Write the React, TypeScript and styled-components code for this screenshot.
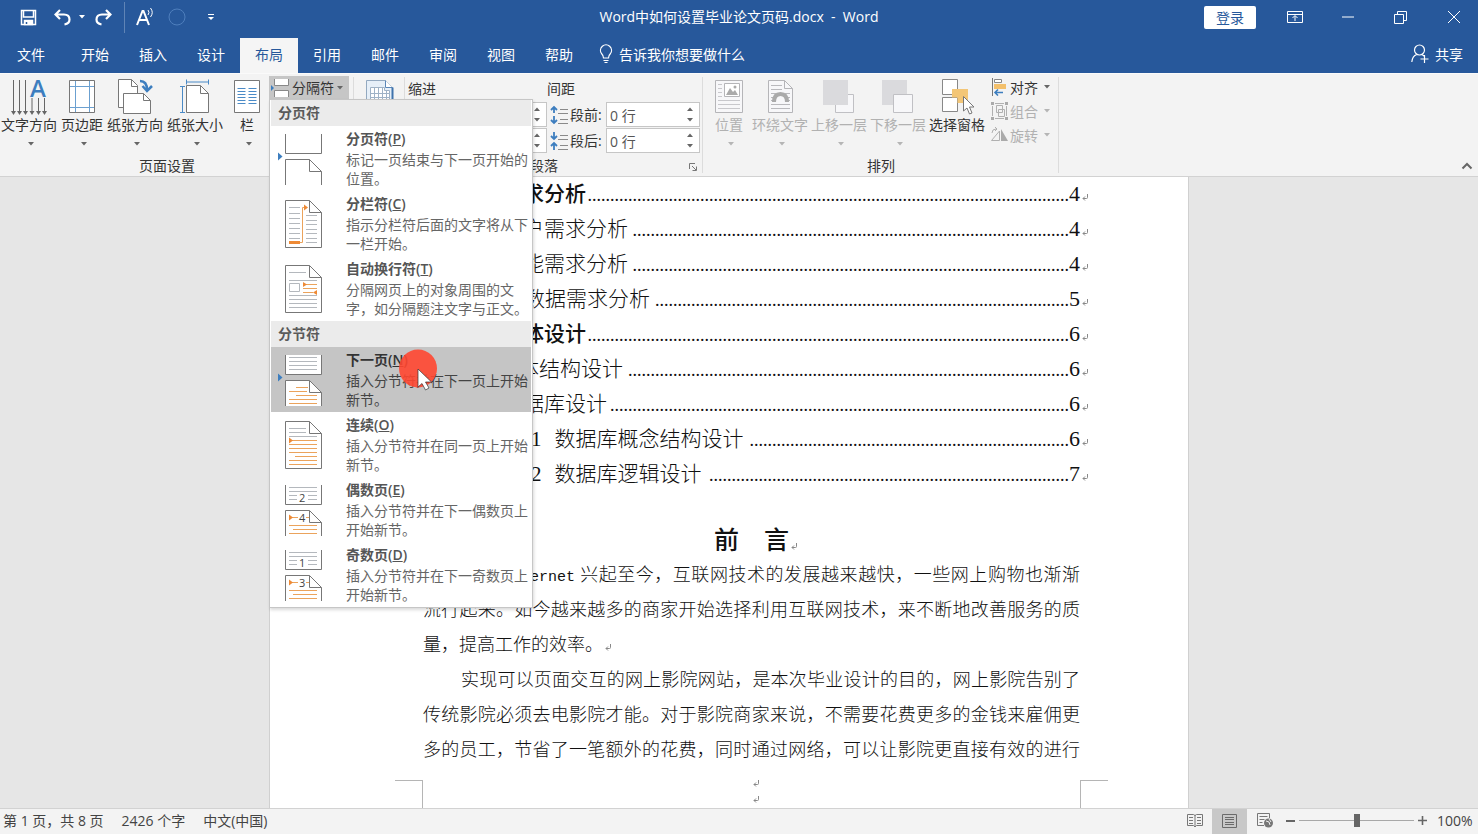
import React from 'react';
import styled, { createGlobalStyle, css } from 'styled-components';

const blue = '#27589b';
const uiFont = '"Open Sans", "Noto Sans CJK SC", sans-serif';
const docFont = '"Liberation Serif", "Noto Sans CJK SC", serif';

const GlobalStyle = createGlobalStyle`
  *, *::before, *::after { box-sizing: border-box; }
  body { margin: 0; font-family: ${uiFont}; font-size: 14px; color: #333; }
  button, input { font: inherit; color: inherit; }
  button { margin: 0; padding: 0; border: 0; background: none; }
  svg { display: block; flex: none; }
`;

const AppFrame = styled.div`
  display: flex;
  flex-direction: column;
  height: 100vh;
  overflow: hidden;
  background: #e6e6e6;
`;

/* ---------- title bar ---------- */

const TitleBar = styled.header`
  display: grid;
  grid-template-columns: 1fr auto 1fr;
  align-items: center;
  height: 36px;
  padding-bottom: 2px;
  flex: none;
  background: ${blue};
  color: #fff;
`;

const QuickAccess = styled.div`
  display: flex;
  align-items: center;
  height: 34px;
  padding-left: 20px;
`;

const QuickButton = styled.button<{ $gap?: number }>`
  display: grid;
  place-items: center;
  height: 32px;
  margin-right: ${(p) => p.$gap ?? 0}px;
`;

const QuickDivider = styled.span`
  width: 1px;
  height: 31px;
  margin: 0 11px 0 12px;
  background: #5f84b6;
`;

const DocTitle = styled.h1`
  margin: 0;
  font-size: 14px;
  font-weight: 400;
  line-height: 20px;
  white-space: pre;
`;

const WindowControls = styled.div`
  display: flex;
  align-items: center;
  justify-content: flex-end;
`;

const SignIn = styled.button`
  width: 52px;
  height: 23px;
  margin-right: 12px;
  border-radius: 2px;
  background: #fff;
  color: ${blue};
  line-height: 23px;
`;

const WindowButton = styled.button`
  display: grid;
  place-items: center;
  width: 53px;
  height: 34px;
  &:last-child { margin-right: -2px; }
`;

/* ---------- tabs ---------- */

const TabBar = styled.nav`
  display: flex;
  height: 37px;
  flex: none;
  background: ${blue};
  color: #fff;
`;

const Tab = styled.button<{ $active?: boolean; $file?: boolean }>`
  width: ${(p) => (p.$file ? 62 : 58)}px;
  height: 35px;
  margin: 2px ${(p) => (p.$file ? 4 : 0)}px 0 0;
  padding-bottom: 2px;
  line-height: 33px;
  ${(p) => p.$active && css`background: #f5f5f5; color: ${blue};`}
`;

const TellMe = styled.button`
  display: flex;
  align-items: center;
  gap: 6px;
  margin-left: 11px;
  padding-bottom: 2px;
`;

const Share = styled.button`
  display: flex;
  align-items: center;
  gap: 6px;
  margin: 0 15px 0 auto;
  padding-bottom: 2px;
`;

/* ---------- ribbon ---------- */

const Ribbon = styled.section`
  position: relative;
  z-index: 2;
  display: flex;
  height: 104px;
  flex: none;
  border-top: 1px solid #fafafa;
  border-bottom: 1px solid #d2d2d2;
  background: #f3f3f3;
`;

const Group = styled.div<{ $width: number }>`
  position: relative;
  display: flex;
  flex-direction: column;
  width: ${(p) => p.$width}px;
  flex: none;
  &::after {
    content: '';
    position: absolute;
    top: 3px;
    right: 0;
    bottom: 3px;
    width: 1px;
    background: #dcdcdc;
  }
`;

const GroupBody = styled.div<{ $inset: number; $gap?: number }>`
  display: flex;
  gap: ${(p) => p.$gap ?? 4}px;
  height: 82px;
  padding-left: ${(p) => p.$inset}px;
`;

const GroupLabel = styled.div<{ $launcher?: boolean }>`
  display: flex;
  align-items: center;
  justify-content: center;
  height: 19px;
  padding-right: ${(p) => (p.$launcher ? 20 : 0)}px;
  line-height: 19px;
`;

const Launcher = styled.button`
  position: absolute;
  right: 6px;
  bottom: 5px;
`;

const BigButton = styled.button<{ $width?: number }>`
  display: flex;
  flex-direction: column;
  align-items: center;
  width: ${(p) => p.$width ?? 56}px;
  padding-top: 4px;
  white-space: nowrap;
  &:disabled { color: #b1b1b1; }
  > svg:last-child:not(:first-child) { margin-left: 4px; }
`;

const BigLabel = styled.span`
  height: 20px;
  margin-bottom: 6px;
  line-height: 18px;
`;

const SmallColumn = styled.div`
  display: flex;
  flex-direction: column;
  padding: 1px 0 0 3px;
`;

const SmallButton = styled.button`
  display: flex;
  align-items: center;
  gap: 2px;
  height: 24px;
  &:disabled { color: #b1b1b1; }
  svg:last-child { margin-left: 4px; }
`;

const BreaksAnchor = styled.div`
  position: relative;
  z-index: 5;
  margin: 2px 0 0 -2px;
`;

const BreaksButton = styled.button`
  display: flex;
  align-items: center;
  gap: 3px;
  width: 80px;
  height: 23px;
  padding-left: 2px;
  background: #c6c6c6;
  line-height: 22px;
`;

const Fields = styled.div`
  display: grid;
  grid-template-columns: 139px 1fr;
  row-gap: 1px;
  align-content: start;
  padding-top: 3px;
`;

const FieldHeading = styled.div`
  height: 24px;
  line-height: 24px;
`;

const FieldRow = styled.div<{ $end?: boolean }>`
  display: flex;
  align-items: center;
  justify-content: ${(p) => (p.$end ? 'flex-end' : 'flex-start')};
  height: 25px;
  padding-left: 3px;
`;

const FieldLabel = styled.label`
  width: 36px;
  margin-left: 1px;
  line-height: 24px;
  white-space: nowrap;
`;

const SpinBox = styled.span`
  display: flex;
  align-items: center;
  width: 94px;
  height: 25px;
  border: 1px solid #c6c6c6;
  background: #fff;
`;

const SpinInput = styled.input`
  flex: 1;
  min-width: 0;
  height: 21px;
  padding: 0 3px;
  border: 0;
  outline: 0;
  background: transparent;
  color: #555;
`;

const SpinArrows = styled.span`
  display: flex;
  flex-direction: column;
  gap: 5px;
  padding-right: 5px;
`;

const SpinArrow = styled.button`
  display: grid;
  place-items: center;
  width: 8px;
  height: 6px;
`;

const Collapse = styled.button`
  margin: auto 5px 6px auto;
`;

/* ---------- breaks menu ---------- */

const Menu = styled.div`
  position: absolute;
  top: 23px;
  left: 0;
  width: 264px;
  padding: 0 1px;
  border: 1px solid #c6c6c6;
  background: #fff;
  box-shadow: 1px 2px 3px rgba(0, 0, 0, 0.15);
`;

const MenuHeading = styled.div`
  height: 26px;
  padding-left: 7px;
  background: #ebebeb;
  color: #5a5a5a;
  font-weight: 600;
  line-height: 26px;
`;

const MenuItem = styled.button<{ $hot?: boolean }>`
  position: relative;
  display: flex;
  gap: 22px;
  width: 100%;
  height: 65px;
  padding: 2px 0 0 7px;
  text-align: left;
  color: #666;
  ${(p) => p.$hot && css`background: #c5c5c5; color: #444;`}
  > svg { margin-top: 6px; }
`;

const ItemTitle = styled.strong<{ $hot?: boolean }>`
  display: block;
  color: ${(p) => (p.$hot ? '#333' : '#555')};
  font-weight: 600;
  line-height: 22px;
`;

const ItemText = styled.span`
  display: block;
  line-height: 19px;
  white-space: pre;
`;

const Pointer = styled.span`
  position: absolute;
  z-index: 1;
  top: 2px;
  left: 128px;
`;

/* ---------- document ---------- */

const Workspace = styled.main`
  display: flex;
  justify-content: center;
  flex: 1;
  min-height: 0;
  padding-right: 20px;
  overflow: hidden;
`;

const Sheet = styled.article`
  width: 920px;
  padding: 0 80px 0 125px;
  border: solid #d0d0d0;
  border-width: 0 1px;
  overflow: hidden;
  background: #fff;
  color: #111;
  font-family: ${docFont};
`;

const Toc = styled.ol`
  margin: -1px 0 0;
  padding: 0 20px 0 28px;
  list-style: none;
`;

const TocRow = styled.li<{ $strong?: boolean; $indent: number }>`
  display: flex;
  align-items: baseline;
  height: 35px;
  padding-left: ${(p) => p.$indent}px;
  font-size: 21px;
  font-weight: ${(p) => (p.$strong ? 500 : 300)};
  line-height: 35px;
  white-space: nowrap;
`;

const TocNumber = styled.span`
  padding-right: 13px;
`;

const Leader = styled.span`
  margin-left: auto;
  font-size: 18px;
  font-weight: 400;
`;

const TocPage = styled.span`
  font-size: 22px;
  font-weight: 400;
`;

const ReturnMark = styled.span`
  display: inline-flex;
  width: 8px;
  padding: 0 0 0 2px;
`;

const TocMark = styled.span`
  display: flex;
  align-self: flex-start;
  width: 8px;
  padding: 18px 0 0 2px;
`;

const Chapter = styled.h2`
  display: flex;
  align-items: center;
  justify-content: center;
  height: 35px;
  margin: 32px 20px 0 28px;
  font-size: 25px;
  font-weight: 500;
  line-height: 35px;
  white-space: pre;
  span { margin-top: 12px; }
`;

const Paragraph = styled.p<{ $fill?: boolean }>`
  margin: 0 28px;
  font-size: 18px;
  font-weight: 300;
  line-height: 35px;
  text-align: justify;
  text-align-last: ${(p) => (p.$fill ? 'justify' : 'left')};
  text-indent: 38px;
`;

const Latin = styled.span`
  font-family: "Liberation Mono", monospace;
  font-size: 15px;
  font-weight: 400;
  line-height: 20px;
`;

const PageFoot = styled.footer`
  display: flex;
  justify-content: space-between;
  margin-top: 12px;
`;

const Corner = styled.span<{ $side: 'left' | 'right' }>`
  width: 28px;
  height: 40px;
  border-top: 1px solid #b5b5b5;
  border-${(p) => (p.$side === 'left' ? 'right' : 'left')}: 1px solid #b5b5b5;
`;

const FootMarks = styled.span`
  display: flex;
  flex-direction: column;
  gap: 9px;
  padding-left: 8px;
`;

/* ---------- status bar ---------- */

const StatusBar = styled.footer`
  display: flex;
  align-items: center;
  height: 26px;
  flex: none;
  padding: 0 2px 0 3px;
  border-top: 1px solid #d2d2d2;
  background: #f3f3f3;
  color: #444;
  line-height: 22px;
`;

const StatusItem = styled.span`
  margin-right: 18px;
  padding-bottom: 2px;
  white-space: nowrap;
`;

const ViewButton = styled.button<{ $active?: boolean }>`
  display: grid;
  place-items: center;
  width: 35px;
  height: 25px;
  padding-bottom: 2px;
  background: ${(p) => (p.$active ? '#c8c8c8' : 'transparent')};
`;

const Views = styled.div`
  display: flex;
  margin-left: auto;
`;

const ZoomControls = styled.div`
  display: flex;
  align-items: center;
  height: 25px;
  padding-bottom: 2px;
`;

const ZoomButton = styled.button`
  display: grid;
  place-items: center;
  width: 17px;
  height: 23px;
`;

const ZoomSlider = styled.input`
  appearance: none;
  width: 115px;
  height: 14px;
  margin: 0;
  background: linear-gradient(#a8a8a8, #a8a8a8) center / 100% 1px no-repeat;
  &::-webkit-slider-thumb {
    appearance: none;
    width: 6px;
    height: 13px;
    background: #666;
  }
`;

const ZoomValue = styled.span`
  width: 39px;
  margin-left: 6px;
`;

/* ---------- drawings ---------- */

const Caret = ({ color = '#666' }: { color?: string }) => (
  <svg width="6" height="4" viewBox="0 0 6 4"><path d="M0 0h6L3 3.5z" fill={color} /></svg>
);

const Enter = () => (
  <svg width="6" height="7" viewBox="0 0 6 7" fill="none" stroke="#888">
    <path d="M5.5 0v3.5q0 1-1 1H1M3 2.5L1 4.5l2 2" />
  </svg>
);

const bigIcons: Record<string, React.ReactNode> = {
  direction: (
    <>
      <path d="M3.5 2v31M9.5 2v31M15.5 2v31M22 20v13M28.5 20v13M34.5 20v13" stroke="#666" />
      <path d="M1 33h5l-2.500 4zM7 33h5l-2.500 4zM13 33h5l-2.500 4zM19.500 33h5L22 37zM26 33h5l-2.500 4zM32 33h5l-2.500 4z" fill="#666" />
      <text x="20" y="19" fontSize="24" fontWeight="600" fill="#3d7ebf" fontFamily="Open Sans">A</text>
    </>
  ),
  margins: (
    <>
      <path d="M6.500 2.500h25v32h-25z" fill="#fff" stroke="#777" />
      <path d="M12.500 3v31M26.500 3v31M7 8.500h24M7 29.500h24" stroke="#6ba0d0" />
    </>
  ),
  orientation: (
    <>
      <path d="M2.500 1.500h13l6 6v22h-19z" fill="#fff" stroke="#777" />
      <path d="M15.500 1.500v7h6" fill="none" stroke="#777" />
      <path d="M7.500 15.500h20l7 7v13h-27z" fill="#fff" stroke="#777" />
      <path d="M27.500 15.500v7h7" fill="none" stroke="#777" />
      <path d="M24 3q7 0 7 9M26.500 8l4.500 5 5-5" fill="none" stroke="#3d7ebf" strokeWidth="2.500" />
    </>
  ),
  size: (
    <>
      <path d="M10.500 7.500h14l8 8v19h-22z" fill="#fff" stroke="#777" />
      <path d="M24.500 7.500v8h8" fill="none" stroke="#777" />
      <path d="M10.500 1.500v5M32.500 1.500v5M10 4h22M4 8.500h5M4 34.500h5M6.500 9v25" stroke="#4a8ac6" />
    </>
  ),
  columns: (
    <>
      <path d="M6.500 2.500h25v32h-25z" fill="#fff" stroke="#777" />
      <path d="M9.500 10.500h8M9.500 13.500h8M9.500 16.500h8M9.500 19.500h8M9.500 22.500h8M9.500 25.500h8M20.500 10.500h8M20.500 13.500h8M20.500 16.500h8M20.500 19.500h8M20.500 22.500h8M20.500 25.500h8" stroke="#4a8ac6" />
    </>
  ),
  position: (
    <>
      <path d="M5.500 2.500h27v32h-27z" fill="#f7f7f9" stroke="#b5b5b8" />
      <path d="M14.500 5.500h15v13h-15z" fill="#fff" stroke="#b5b5b8" />
      <path d="M16 17l4-7 3 4 2-2 3 5z" fill="#aaa" />
      <circle cx="25" cy="9" r="1.500" fill="#aaa" />
      <path d="M8 6.500h4M8 10.500h4M8 14.500h4M8 18.500h4M8 22.500h22M8 26.500h22M8 30.500h22" stroke="#c8c8cc" />
    </>
  ),
  wrap: (
    <>
      <path d="M7.500 2.500h16l8 8v24h-24z" fill="#f7f7f9" stroke="#b5b5b8" />
      <path d="M23.500 2.500v8h8" fill="none" stroke="#b5b5b8" />
      <path d="M10 7.500h11M10 11.500h11M10 26.500h19M10 30.500h19M10 15.500h5M24 15.500h5M10 19.500h2M27 19.500h2M10 22.500h2M27 22.500h2" stroke="#b9b9bd" />
      <path d="M13 24q0-8 6.500-8t6.500 8" fill="none" stroke="#aaa" strokeWidth="4" />
    </>
  ),
  forward: (
    <>
      <path d="M22.500 16.500h11v18h-18v-9" fill="#f7f7f9" stroke="#c0c0c4" />
      <path d="M3 2h25v25H3z" fill="#dadadd" />
    </>
  ),
  backward: (
    <>
      <path d="M3 2h25v25H3z" fill="#dadadd" />
      <path d="M14.500 16.500h19v18h-19z" fill="#f7f7f9" stroke="#c0c0c4" />
    </>
  ),
  selection: (
    <>
      <path d="M4.500 1.500h15v15h-15zM4.500 19.500h15v14h-15z" fill="#fff" stroke="#888" />
      <path d="M14 11h16v14H19.500v-5.500H14z" fill="#f3c677" />
      <path d="M25.500 18.500v14.500l3.500-3 2.500 6 2.500-1-2.500-6h4.500z" fill="#fff" stroke="#777" />
    </>
  ),
};

const BigIcon = ({ name }: { name: string }) => (
  <svg width="38" height="38" viewBox="0 0 38 38">{bigIcons[name]}</svg>
);

const Fold = ({ y }: { y: number }) => (
  <path d={`M31.500 ${y}v12h12`} fill="none" stroke="#777" />
);

const TopPart = () => <path d="M7.500 0v19.500h36V0" fill="#fff" stroke="#777" />;
const BottomPart = () => (
  <>
    <path d="M7.500 51V25.500h24l12 12V51" fill="#fff" stroke="#777" />
    <Fold y={25.5} />
  </>
);
const WholePage = () => (
  <>
    <path d="M7.500 1.500h24l12 12v35h-36z" fill="#fff" stroke="#777" />
    <Fold y={1.5} />
  </>
);
const Marker = () => <path d="M0 18.500v8l4.500-4z" fill="#3d7ebf" />;
const grey = '#b4b8bd';
const orange = '#eba35c';

const NumberedPages = ({ first, second }: { first: string; second: string }) => (
  <>
    <TopPart />
    <BottomPart />
    <path d="M11 2.500h28M11 6.500h28M11 10.500h8M30 10.500h9M11 14.500h8M30 14.500h9" stroke={grey} />
    <path d="M13 32.500h7M28 32.500h3M11 40.500h28M15 44.500h24M11 48.500h28" stroke={orange} />
    <path d="M11 29.500v6l4-3z" fill="#ee8a35" />
    <text x="21" y="17" fontSize="11" fill="#444" fontFamily="Open Sans">{first}</text>
    <text x="21" y="37" fontSize="11" fill="#444" fontFamily="Open Sans">{second}</text>
  </>
);

const breakIcons: Record<string, React.ReactNode> = {
  page: <><Marker /><TopPart /><BottomPart /></>,
  column: (
    <>
      <WholePage />
      <path d="M11 8.500h11M11 14.500h11M11 19.500h11M11 24.500h11M11 29.500h11M11 34.500h11M11 39.500h11M28 16.500h11M28 21.500h11M28 25.500h11M28 30.500h11M28 34.500h11M28 39.500h11M28 43.500h11" stroke={grey} />
      <path d="M22 43.500h2.500v-35H27" fill="none" stroke={orange} />
      <path d="M26 5.500v6l4-3zM11 42h11v3H11z" fill="#ee8a35" />
    </>
  ),
  wrap: (
    <>
      <WholePage />
      <path d="M11 8.500h17M11 16.500h28M11 31.500h28M11 35.500h28M11 39.500h28M11 43.500h28" stroke={grey} />
      <path d="M11.500 19.500h10v8h-10z" fill="#fff" stroke={grey} />
      <path d="M26 20.500h13M25 24.500h14M25 28.500h10" stroke={orange} />
      <path d="M25 18v5l4-2.500zM39 26v5l-4-2.500z" fill="#ee8a35" />
    </>
  ),
  next: (
    <>
      <Marker /><TopPart /><BottomPart />
      <path d="M11 2.500h28M11 6.500h28M11 10.500h28M11 14.500h28" stroke={grey} />
      <path d="M18 32.500h12M11 36.500h18M18 40.500h21M11 44.500h28M11 48.500h28" stroke={orange} />
    </>
  ),
  continuous: (
    <>
      <WholePage />
      <path d="M11 8.500h17M11 12.500h17M11 16.500h28" stroke={grey} />
      <path d="M14 20.500h25M11 24.500h28M11 28.500h28M11 32.500h28M17 36.500h22M11 40.500h28M11 44.500h28" stroke={orange} />
      <path d="M11 17.500v6l4-3z" fill="#ee8a35" />
    </>
  ),
  even: <NumberedPages first="2" second="4" />,
  odd: <NumberedPages first="1" second="3" />,
};

/* ---------- data ---------- */

const tabs = ['开始', '插入', '设计', '布局', '引用', '邮件', '审阅', '视图', '帮助'];

const pageSetup = [
  { icon: 'direction', label: '文字方向' },
  { icon: 'margins', label: '页边距', width: 42 },
  { icon: 'orientation', label: '纸张方向' },
  { icon: 'size', label: '纸张大小' },
  { icon: 'columns', label: '栏', width: 40 },
];

const arrange = [
  { icon: 'position', label: '位置', width: 40 },
  { icon: 'wrap', label: '环绕文字' },
  { icon: 'forward', label: '上移一层' },
  { icon: 'backward', label: '下移一层' },
];

const pageBreaks = [
  { icon: 'page', title: '分页符', key: 'P', text: '标记一页结束与下一页开始的\n位置。' },
  { icon: 'column', title: '分栏符', key: 'C', text: '指示分栏符后面的文字将从下\n一栏开始。' },
  { icon: 'wrap', title: '自动换行符', key: 'T', text: '分隔网页上的对象周围的文\n字，如分隔题注文字与正文。' },
];

const sectionBreaks = [
  { icon: 'next', title: '下一页', key: 'N', text: '插入分节符并在下一页上开始\n新节。', hot: true },
  { icon: 'continuous', title: '连续', key: 'O', text: '插入分节符并在同一页上开始\n新节。' },
  { icon: 'even', title: '偶数页', key: 'E', text: '插入分节符并在下一偶数页上\n开始新节。' },
  { icon: 'odd', title: '奇数页', key: 'D', text: '插入分节符并在下一奇数页上\n开始新节。' },
];

const toc = [
  { title: '求分析', page: 4, indent: 100, dots: 107, strong: true },
  { title: '户需求分析', page: 4, indent: 100, dots: 97 },
  { title: '能需求分析', page: 4, indent: 100, dots: 97 },
  { title: '数据需求分析', page: 5, indent: 101, dots: 92 },
  { title: '体设计', page: 6, indent: 100, dots: 107, strong: true },
  { title: '体结构设计', page: 6, indent: 95, dots: 98 },
  { title: '据库设计', page: 6, indent: 100, dots: 102 },
  { no: '1', title: '数据库概念结构设计', page: 6, indent: 108, dots: 71 },
  { no: '2', title: '数据库逻辑设计', page: 7, indent: 108, dots: 80 },
];

/* ---------- parts ---------- */

type BreakEntry = { icon: string; title: string; key: string; text: string; hot?: boolean };

const BreakItem = ({ item }: { item: BreakEntry }) => (
  <MenuItem role="menuitem" $hot={item.hot}>
    <svg width="46" height="51" viewBox="0 0 46 51">{breakIcons[item.icon]}</svg>
    <span>
      <ItemTitle $hot={item.hot}>{item.title}(<u>{item.key}</u>)</ItemTitle>
      <ItemText>{item.text}</ItemText>
    </span>
    {item.hot && (
      <Pointer>
        <svg width="40" height="42" viewBox="0 0 40 42">
          <circle cx="19" cy="19.500" r="19" fill="#ff4630" fillOpacity=".9" />
          <path d="M19 20v18l4-3.500 3.500 6.500 3.500-2-3.500-6h6z" fill="#fff" stroke="#333" strokeWidth=".7" />
        </svg>
      </Pointer>
    )}
  </MenuItem>
);

const Spin = ({ id, value, label }: { id: string; value: string; label?: string }) => (
  <SpinBox>
    <SpinInput id={id} defaultValue={value} aria-label={label} />
    <SpinArrows>
      <SpinArrow aria-label="增加"><svg width="6" height="4"><path d="M0 4h6L3 .5z" fill="#666" /></svg></SpinArrow>
      <SpinArrow aria-label="减少"><Caret /></SpinArrow>
    </SpinArrows>
  </SpinBox>
);

const SpacingIcon = ({ before }: { before?: boolean }) => (
  <svg width="19" height="20" viewBox="0 0 19 20" fill="none">
    <path d="M10 4.500h8M8 8.500h10M10 14.500h8M8 18.500h10" stroke="#8a8a8a" />
    {before ? (
      <path d="M4 2v6M1 5l3-3 3 3M4 11v7M1 15l3 3 3-3" stroke="#3d7ebf" strokeWidth="1.800" />
    ) : (
      <path d="M4 1v7M1 5l3 3 3-3M4 12v7M1 15l3-3 3 3" stroke="#3d7ebf" strokeWidth="1.800" />
    )}
  </svg>
);

export default function App() {
  return (
    <AppFrame>
      <GlobalStyle />
      <TitleBar>
        <QuickAccess>
          <QuickButton aria-label="保存" $gap={17}>
            <svg width="17" height="17" viewBox="0 0 17 17" fill="none" stroke="#fff" strokeWidth="1.500">
              <path d="M1.500 1.500h14v14h-14zM3.500 2v6h10V2" /><path d="M4.500 11.500h8v4h-8z" fill="#fff" /><path d="M6.500 13v2" stroke={blue} />
            </svg>
          </QuickButton>
          <QuickButton aria-label="撤消" $gap={8}>
            <svg width="17" height="17" viewBox="0 0 17 17" fill="none" stroke="#fff" strokeWidth="2.200">
              <path d="M6 1L1.500 5.500 6 10M2 5.500h8q5.500 0 5.500 5 0 4-5 5" />
            </svg>
          </QuickButton>
          <QuickButton aria-label="撤消选项" $gap={10}><Caret color="#fff" /></QuickButton>
          <QuickButton aria-label="恢复">
            <svg width="17" height="17" viewBox="0 0 17 17" fill="none" stroke="#fff" strokeWidth="2.200">
              <path d="M11 1l4.500 4.500L11 10M15 5.500H7q-5.500 0-5.500 5 0 4 5 5" />
            </svg>
          </QuickButton>
          <QuickDivider />
          <QuickButton aria-label="朗读" $gap={14}>
            <svg width="18" height="20" viewBox="0 0 18 20" fill="none" stroke="#fff">
              <path d="M1 18L6.500 4h1L13 18M3 13h8" strokeWidth="2" /><path d="M12 3q2 2.500 0 5M14.500 1q3.500 4.500 0 9" />
            </svg>
          </QuickButton>
          <QuickButton aria-label="录制" $gap={21}>
            <svg width="18" height="18" viewBox="0 0 18 18"><circle cx="9" cy="9" r="8" fill="none" stroke="#4f7fbd" /></svg>
          </QuickButton>
          <QuickButton aria-label="自定义快速访问工具栏">
            <svg width="8" height="8" viewBox="0 0 8 8"><path d="M1 1.500h6" stroke="#fff" /><path d="M1 4h6L4 7z" fill="#fff" /></svg>
          </QuickButton>
        </QuickAccess>
        <DocTitle>Word中如何设置毕业论文页码.docx  -  Word</DocTitle>
        <WindowControls>
          <SignIn>登录</SignIn>
          <WindowButton aria-label="功能区显示选项">
            <svg width="16" height="14" viewBox="0 0 16 14" fill="none" stroke="#fff"><path d="M.5 1.500h15v11H.5zM.5 4.500h15M8 11V6M5.500 8L8 5.500 10.500 8" /></svg>
          </WindowButton>
          <WindowButton aria-label="最小化">
            <svg width="12" height="2"><path d="M0 1h12" stroke="#fff" /></svg>
          </WindowButton>
          <WindowButton aria-label="向下还原">
            <svg width="13" height="13" viewBox="0 0 13 13" fill="none" stroke="#fff"><path d="M.5 3.500h9v9h-9zM3.500 3V.5h9v9H10" /></svg>
          </WindowButton>
          <WindowButton aria-label="关闭">
            <svg width="12" height="12" viewBox="0 0 12 12" stroke="#fff"><path d="M0 0l12 12M12 0L0 12" /></svg>
          </WindowButton>
        </WindowControls>
      </TitleBar>

      <TabBar>
        <Tab $file>文件</Tab>
        {tabs.map((t) => <Tab key={t} $active={t === '布局'}>{t}</Tab>)}
        <TellMe>
          <svg width="14" height="20" viewBox="0 0 14 20" fill="none" stroke="#fff" strokeWidth="1.200">
            <path d="M4.500 14q0-2.500-2-4.500a5.500 5.500 0 1 1 9 0q-2 2-2 4.500zM4.500 16.500h5M5.500 18.500h3" />
          </svg>
          告诉我你想要做什么
        </TellMe>
        <Share>
          <svg width="18" height="19" viewBox="0 0 18 19" fill="none" stroke="#fff" strokeWidth="1.200">
            <circle cx="8.500" cy="6" r="5" /><path d="M.8 18q.5-6 5-7.500M11 10.500l2 1.500M13.500 11v8M9.500 15h8" />
          </svg>
          共享
        </Share>
      </TabBar>

      <Ribbon>
        <Group $width={354}>
          <GroupBody $inset={1}>
            {pageSetup.map((b) => (
              <BigButton key={b.label} $width={b.width}>
                <BigIcon name={b.icon} /><BigLabel>{b.label}</BigLabel><Caret />
              </BigButton>
            ))}
            <BreaksAnchor>
              <BreaksButton aria-haspopup="menu" aria-expanded="true">
                <svg width="18" height="18" viewBox="0 0 18 18">
                  <path d="M3.500 0v6.500h14V0M3.500 18v-6.500h14V18" fill="#fff" stroke="#888" /><path d="M0 6v6l3-3z" fill="#3d7ebf" />
                </svg>
                分隔符
                <Caret />
              </BreaksButton>
              <Menu role="menu">
                <MenuHeading>分页符</MenuHeading>
                {pageBreaks.map((i) => <BreakItem key={i.key} item={i} />)}
                <MenuHeading>分节符</MenuHeading>
                {sectionBreaks.map((i) => <BreakItem key={i.key} item={i} />)}
              </Menu>
            </BreaksAnchor>
          </GroupBody>
          <GroupLabel $launcher>页面设置</GroupLabel>
        </Group>

        <Group $width={51}>
          <GroupBody $inset={11}>
            <BigButton $width={30} aria-label="稿纸设置">
              <svg width="30" height="38" viewBox="0 0 30 38">
                <path d="M1.500 2.500h19l7 7v26h-26z" fill="#e6eff8" stroke="#93a9c0" />
                <path d="M20.500 2.500v7h7" fill="#fff" stroke="#5b87b8" />
                <path d="M27.500 9.500v26" stroke="#3f73ac" strokeWidth="2" />
                <path d="M5.500 9.500h14v3h5v22h-19zM5 15.500h19M5 19.500h19M5 23.500h19M9.500 9v25M13.500 9v25M17.500 9v25M21.500 13v21" fill="#fff" stroke="#9fb2c6" />
              </svg>
            </BigButton>
          </GroupBody>
        </Group>

        <Group $width={298}>
          <GroupBody $inset={3}>
            <Fields>
              <FieldHeading>缩进</FieldHeading>
              <FieldHeading>间距</FieldHeading>
              <FieldRow $end>
                <Spin id="indent-left" value="" label="左缩进" />
              </FieldRow>
              <FieldRow>
                <SpacingIcon before /><FieldLabel htmlFor="space-before">段前:</FieldLabel><Spin id="space-before" value="0 行" />
              </FieldRow>
              <FieldRow $end>
                <Spin id="indent-right" value="" label="右缩进" />
              </FieldRow>
              <FieldRow>
                <SpacingIcon /><FieldLabel htmlFor="space-after">段后:</FieldLabel><Spin id="space-after" value="0 行" />
              </FieldRow>
            </Fields>
          </GroupBody>
          <GroupLabel $launcher>段落</GroupLabel>
          <Launcher aria-label="段落设置">
            <svg width="8" height="8" viewBox="0 0 8 8" fill="none" stroke="#777"><path d="M.5 6V.5H6M3 3l4 4M7.500 3.500v4h-4" /></svg>
          </Launcher>
        </Group>

        <Group $width={356}>
          <GroupBody $inset={6} $gap={3}>
            {arrange.map((b) => (
              <BigButton key={b.label} $width={b.width} disabled>
                <BigIcon name={b.icon} /><BigLabel>{b.label}</BigLabel><Caret color="#b5b5b5" />
              </BigButton>
            ))}
            <BigButton><BigIcon name="selection" /><BigLabel>选择窗格</BigLabel></BigButton>
            <SmallColumn>
              <SmallButton>
                <svg width="17" height="18" viewBox="0 0 17 18" fill="none">
                  <path d="M1.500 0v18" stroke="#777" /><path d="M3.500 1.500h7v3h-7z" fill="#fff" stroke="#888" />
                  <path d="M3 6h12v5H3z" fill="#f3c06c" /><path d="M4 14.500h8M7 11.500l-3 3 3 3" stroke="#3d7ebf" strokeWidth="1.600" />
                </svg>
                对齐<Caret />
              </SmallButton>
              <SmallButton disabled>
                <svg width="17" height="18" viewBox="0 0 17 18" fill="none" stroke="#b0b0b0">
                  <path d="M5.500 3.500h6v7h-6zM7.500 7.500h6v7h-6zM4 1.500h9M4 16.500h9M1.500 4v10M15.500 4v10" />
                  <path d="M0 0h3v3H0zM14 0h3v3h-3zM0 15h3v3H0zM14 15h3v3h-3z" fill="#aaa" stroke="none" />
                </svg>
                组合<Caret color="#b5b5b5" />
              </SmallButton>
              <SmallButton disabled>
                <svg width="17" height="18" viewBox="0 0 17 18" fill="none" stroke="#b0b0b0">
                  <path d="M8.500 5v9.500H.5z" /><path d="M10 3v12h7z" fill="#aaa" stroke="none" /><path d="M1 7q0-4 4-4M4 1l2 2-2 2" />
                </svg>
                旋转<Caret color="#b5b5b5" />
              </SmallButton>
            </SmallColumn>
          </GroupBody>
          <GroupLabel>排列</GroupLabel>
        </Group>
        <Collapse aria-label="折叠功能区">
          <svg width="12" height="8" viewBox="0 0 12 8" fill="none" stroke="#666" strokeWidth="2"><path d="M1.500 6.500L6 2l4.500 4.500" /></svg>
        </Collapse>
      </Ribbon>

      <Workspace>
        <Sheet>
          <Toc>
            {toc.map((r) => (
              <TocRow key={r.title} $strong={r.strong} $indent={r.indent}>
                {r.no && <TocNumber>{r.no}</TocNumber>}
                {r.title}
                <Leader aria-hidden="true">{'.'.repeat(r.dots)}</Leader>
                <TocPage>{r.page}</TocPage>
                <TocMark><Enter /></TocMark>
              </TocRow>
            ))}
          </Toc>
          <Chapter>前　言<ReturnMark><Enter /></ReturnMark></Chapter>
          <Paragraph>
            随着 <Latin>Internet</Latin> 兴起至今，互联网技术的发展越来越快，一些网上购物也渐渐流行起来。如今越来越多的商家开始选择利用互联网技术，来不断地改善服务的质量，提高工作的效率。<ReturnMark><Enter /></ReturnMark>
          </Paragraph>
          <Paragraph $fill>
            实现可以页面交互的网上影院网站，是本次毕业设计的目的，网上影院告别了传统影院必须去电影院才能。对于影院商家来说，不需要花费更多的金钱来雇佣更多的员工，节省了一笔额外的花费，同时通过网络，可以让影院更直接有效的进行
          </Paragraph>
          <PageFoot>
            <Corner $side="left" />
            <FootMarks><Enter /><Enter /></FootMarks>
            <Corner $side="right" />
          </PageFoot>
        </Sheet>
      </Workspace>

      <StatusBar>
        <StatusItem>第 1 页，共 8 页</StatusItem>
        <StatusItem>2426 个字</StatusItem>
        <StatusItem>中文(中国)</StatusItem>
        <Views>
          <ViewButton aria-label="阅读视图">
            <svg width="16" height="15" viewBox="0 0 16 15" fill="none" stroke="#777">
              <path d="M.5 1.500h6l1.500 1 1.500-1h6v11h-6L8 14l-1.500-1.500h-6zM8 2v11" /><path d="M2 4.500h4M2 7.500h4M2 10.500h4M10 4.500h4M10 7.500h4M10 10.500h4" />
            </svg>
          </ViewButton>
          <ViewButton $active aria-label="页面视图">
            <svg width="15" height="14" viewBox="0 0 15 14" fill="none" stroke="#6a6a6a">
              <path d="M.5.5h14v13H.5zM3 3.500h9M3 5.500h9M3 8.500h9M3 10.500h9" />
            </svg>
          </ViewButton>
          <ViewButton aria-label="Web 版式视图">
            <svg width="16" height="15" viewBox="0 0 16 15" fill="none" stroke="#777">
              <path d="M7 12.500H.5V.5h12V5M2.500 3.500h8M2.500 6.500h5M2.500 9.500h3" /><circle cx="11.500" cy="10" r="4.500" fill="#777" stroke="none" /><path d="M9 8l3 1 1 3M12 6l2 3" stroke="#eee" />
            </svg>
          </ViewButton>
        </Views>
        <ZoomControls>
          <ZoomButton aria-label="缩小"><svg width="9" height="2"><path d="M0 1h9" stroke="#666" strokeWidth="2" /></svg></ZoomButton>
          <ZoomSlider type="range" min="0" max="100" defaultValue="50" aria-label="显示比例" />
          <ZoomButton aria-label="放大"><svg width="9" height="9"><path d="M0 4.500h9M4.500 0v9" stroke="#666" strokeWidth="1.600" /></svg></ZoomButton>
          <ZoomValue>100%</ZoomValue>
        </ZoomControls>
      </StatusBar>
    </AppFrame>
  );
}
